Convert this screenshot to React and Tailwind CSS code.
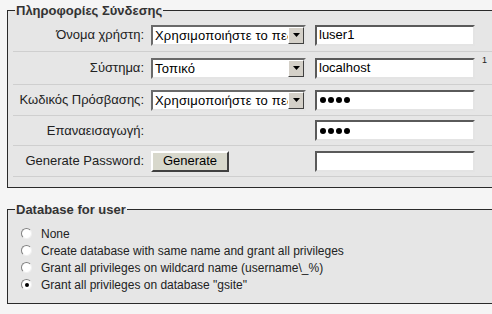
import React from "react";

const font = { fontFamily: '"Liberation Sans", Arial, sans-serif' };

const Arrow = () => (
  <div className="flex h-[17px] w-[16px] shrink-0 items-center justify-center border border-t-white border-l-white border-r-[#404040] border-b-[#404040] bg-[#d4d0c8]">
    <svg width="7" height="4" viewBox="0 0 7 4">
      <path d="M0 0h7L3.5 4z" fill="#000" />
    </svg>
  </div>
);

const Select = ({ value }) => (
  <div className="flex h-[21px] w-[155px] border-2 border-t-[#6a6a6a] border-l-[#6a6a6a] border-r-[#e4e4e4] border-b-[#e4e4e4] bg-white">
    <span className="flex-1 overflow-hidden whitespace-nowrap pl-[2px] text-[13px] leading-[17px] tracking-[0.2px] text-black">
      {value}
    </span>
    <Arrow />
  </div>
);

const Dots = () => (
  <div className="flex gap-[2px] pl-[3px]">
    <span className="h-[6px] w-[6px] rounded-full bg-black" />
    <span className="h-[6px] w-[6px] rounded-full bg-black" />
    <span className="h-[6px] w-[6px] rounded-full bg-black" />
    <span className="h-[6px] w-[6px] rounded-full bg-black" />
  </div>
);

const Input = ({ children }) => (
  <div className="flex h-[21px] w-[160px] items-center border-2 border-t-[#5a5a5a] border-l-[#5a5a5a] border-r-[#e4e4e4] border-b-[#e4e4e4] bg-white text-[13px] text-black">
    {children}
  </div>
);

const Row = ({ label, h, children, note }) => (
  <div className={`ml-[5px] flex items-center border-b border-[#cfcfcf] ${h}`}>
    <div className="w-[132px] shrink-0 pr-[1px] text-right text-[13px] text-[#222]">{label}</div>
    <div className="ml-[6px] flex items-center">{children}</div>
    {note && <span className="ml-[7px] -mt-[14px] text-[9px] text-[#222]">{note}</span>}
  </div>
);

const Radio = ({ checked, label }) => (
  <div className="flex h-[17px] items-center">
    <span className="ml-[13px] flex h-[11px] w-[11px] items-center justify-center rounded-full border border-t-[#808080] border-l-[#808080] border-r-[#f0f0f0] border-b-[#f0f0f0] bg-white">
      {checked && <span className="h-[4px] w-[4px] rounded-full bg-black" />}
    </span>
    <span className="ml-[9px] text-[12px] text-[#222]">{label}</span>
  </div>
);

export default function App() {
  return (
    <div className="h-[314px] w-[492px] overflow-hidden bg-[#f5f5f5] pt-[3px]" style={font}>
      <fieldset className="ml-[7px] w-[520px] border border-[#2a2a2a] bg-[#e6e6e6] px-0 pt-[1px] pb-[10px]">
        <legend className="ml-[7px] px-[1px] text-[13px] font-bold leading-[15px] text-[#333]">
          Πληροφορίες Σύνδεσης
        </legend>
        <Row label="Όνομα χρήστη:" h="h-[33px]">
          <Select value="Χρησιμοποιήστε το πεδίο κειμένου" />
          <div className="ml-[9px]">
            <Input>
              <span className="pl-[2px]">luser1</span>
            </Input>
          </div>
        </Row>
        <Row label="Σύστημα:" h="h-[33px]" note="1">
          <Select value="Τοπικό" />
          <div className="ml-[9px]">
            <Input>
              <span className="pl-[2px]">localhost</span>
            </Input>
          </div>
        </Row>
        <Row label="Κωδικός Πρόσβασης:" h="h-[31px]">
          <Select value="Χρησιμοποιήστε το πεδίο κειμένου" />
          <div className="ml-[9px]">
            <Input>
              <Dots />
            </Input>
          </div>
        </Row>
        <Row label="Επαναεισαγωγή:" h="h-[30px]">
          <div className="w-[155px]" />
          <div className="ml-[9px]">
            <Input>
              <Dots />
            </Input>
          </div>
        </Row>
        <Row label="Generate Password:" h="h-[31px]">
          <div className="w-[155px]">
            <button className="flex h-[21px] w-[78px] items-center justify-center border-2 border-t-white border-l-white border-r-[#404040] border-b-[#404040] bg-[#d8d8cc] text-[13px] text-black">
              Generate
            </button>
          </div>
          <div className="ml-[9px]">
            <Input />
          </div>
        </Row>
      </fieldset>

      <fieldset className="ml-[7px] mt-[14px] w-[520px] border border-[#2a2a2a] bg-[#e6e6e6] px-0 pt-[8px] pb-[10px]">
        <legend className="ml-[7px] px-[1px] text-[13px] font-bold leading-[15px] text-[#333]">
          Database for user
        </legend>
        <Radio label="None" />
        <Radio label="Create database with same name and grant all privileges" />
        <Radio label="Grant all privileges on wildcard name (username\_%)" />
        <Radio checked label={'Grant all privileges on database "gsite"'} />
      </fieldset>
    </div>
  );
}
